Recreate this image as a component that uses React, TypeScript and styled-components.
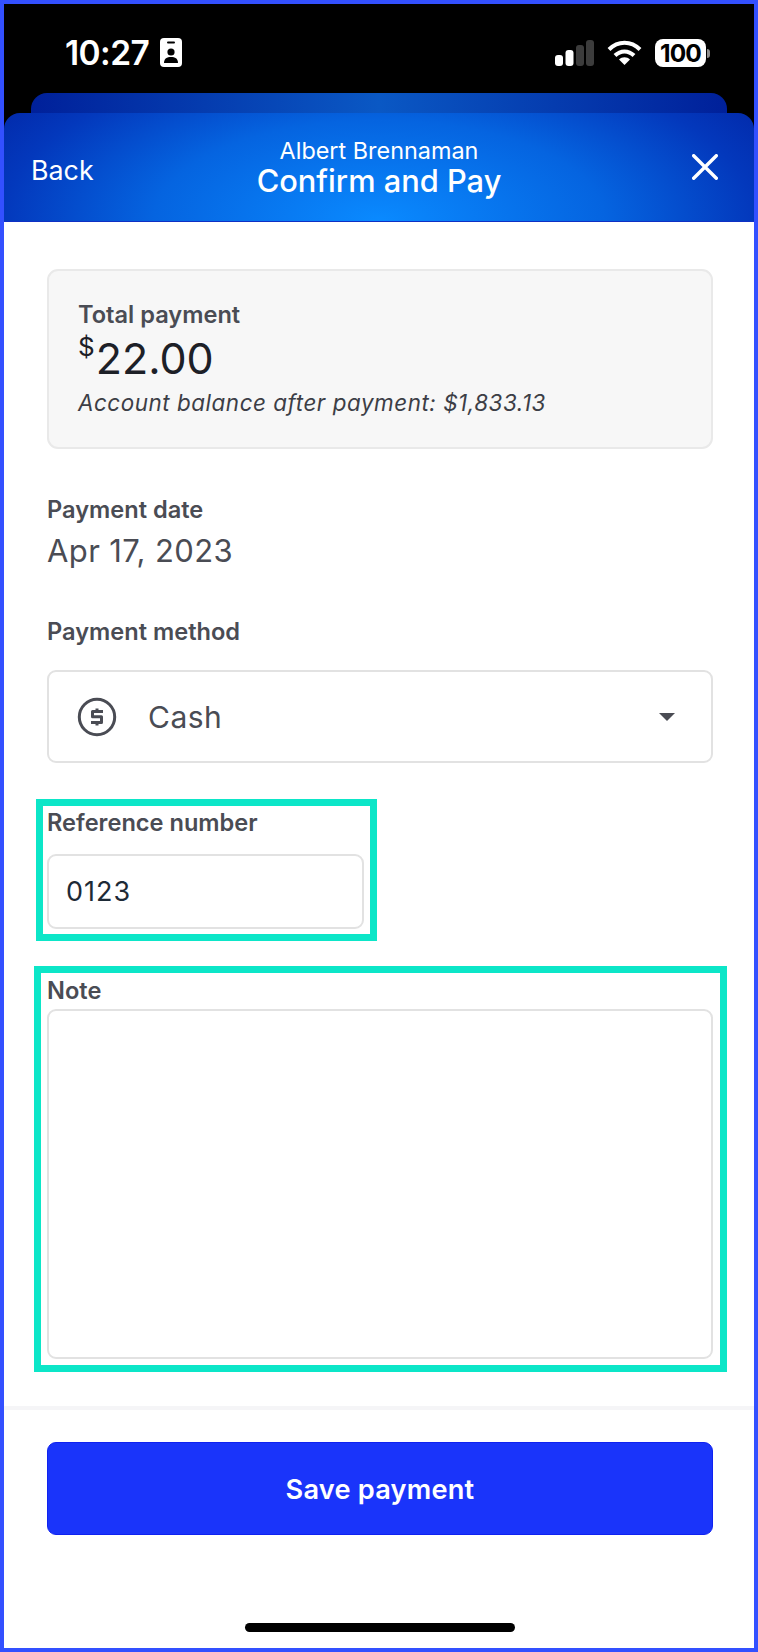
import React from "react";
import styled, { createGlobalStyle } from "styled-components";

const Global = createGlobalStyle`
  html, body { margin: 0; padding: 0; background: #fff; }
  body { font-family: Inter, "Liberation Sans", sans-serif; }
  * { box-sizing: border-box; }
`;

const Phone = styled.div`
  width: 758px;
  height: 1652px;
  border: 4px solid #3350ff;
  background: #fff;
  display: flex;
  flex-direction: column;
  overflow: hidden;
`;

const TopArea = styled.div`
  background: #000;
  display: flex;
  flex-direction: column;
`;

const StatusBar = styled.div`
  height: 89px;
  display: flex;
  align-items: flex-start;
  justify-content: space-between;
  padding: 34px 44px 0 61px;
  color: #fff;
`;

const StatusLeft = styled.div`
  display: flex;
  align-items: center;
  gap: 11px;
`;

const Time = styled.span`
  font-size: 33.5px;
  font-weight: 600;
  line-height: 28px;
  letter-spacing: -0.6px;
`;

const StatusRight = styled.div`
  display: flex;
  align-items: center;
  gap: 13px;
`;

const BatteryWrap = styled.div`
  display: flex;
  align-items: center;
  gap: 1px;
  margin-top: 1px;
`;

const BatteryBody = styled.div`
  width: 51px;
  height: 28px;
  border-radius: 8px;
  background: #fff;
  color: #000;
  font-size: 24.5px;
  font-weight: 700;
  line-height: 28px;
  text-align: center;
  letter-spacing: -0.8px;
`;

const BatteryNub = styled.div`
  width: 3px;
  height: 9px;
  border-radius: 0 3px 3px 0;
  background: #8d8d8d;
`;

const BackSheet = styled.div`
  height: 20px;
  margin: 0 27px;
  border-radius: 16px 16px 0 0;
  background: linear-gradient(90deg, #00209a 0%, #0a58c4 50%, #00209a 100%);
`;

const Header = styled.header`
  height: 109px;
  border-radius: 16px 16px 0 0;
  border-bottom: 1px solid #0f30c4;
  background: radial-gradient(ellipse 470px 210px at 50% 100%, #0a8aff 0%, #0564e0 48%, #0338bc 80%, #0226a6 100%);
  color: #fff;
  display: grid;
  grid-template-columns: 1fr auto 1fr;
  align-items: center;
  padding: 0 27px;
`;

const BackLink = styled.span`
  font-size: 26.8px;
  line-height: 30px;
  margin-top: 6px;
`;

const HeaderTitles = styled.div`
  display: flex;
  flex-direction: column;
  align-items: center;
`;

const HeaderSub = styled.span`
  font-size: 23.4px;
  line-height: 28px;
`;

const HeaderTitle = styled.span`
  font-size: 30.8px;
  font-weight: 500;
  line-height: 32px;
`;

const CloseButton = styled.div`
  justify-self: end;
  display: flex;
  margin-right: 9px;
`;

const Content = styled.main`
  display: flex;
  flex-direction: column;
  padding: 47px 41px 0 43px;
`;

const SummaryCard = styled.section`
  height: 180px;
  border: 2px solid #e9e9e9;
  border-radius: 11px;
  background: #f7f7f7;
  padding: 30px 30px 0 29px;
  display: flex;
  flex-direction: column;
`;

const SummaryLabel = styled.div`
  font-size: 23.6px;
  font-weight: 600;
  line-height: 28px;
  color: #4a4c54;
`;

const Amount = styled.div`
  display: flex;
  align-items: flex-start;
  color: #1d2027;
  height: 58px;
  font-size: 43px;
  line-height: 58px;
`;

const Currency = styled.span`
  font-size: 26px;
  line-height: 36px;
  margin-right: 1px;
`;

const BalanceNote = styled.div`
  margin-top: 2px;
  font-size: 22.4px;
  font-style: italic;
  line-height: 28px;
  letter-spacing: 0.55px;
  color: #3c3e46;
`;

const FieldLabel = styled.div`
  font-size: 23.6px;
  font-weight: 600;
  line-height: 28px;
  color: #4a4c54;
`;

const DateField = styled.div`
  margin-top: 47px;
`;

const DateValue = styled.div`
  margin-top: 8px;
  font-size: 31px;
  line-height: 38px;
  letter-spacing: 0.4px;
  color: #4a4c54;
`;

const MethodField = styled.div`
  margin-top: 48px;
`;

const SelectBox = styled.div`
  margin-top: 24px;
  height: 93px;
  border: 2px solid #e2e2e2;
  border-radius: 9px;
  display: flex;
  align-items: center;
  padding: 0 36px 0 28px;
  color: #4a4c54;
`;

const SelectText = styled.span`
  flex: 1;
  margin-left: 31px;
  font-size: 30px;
  letter-spacing: 0.5px;
`;

const Caret = styled.div`
  width: 0;
  height: 0;
  border-left: 8px solid transparent;
  border-right: 8px solid transparent;
  border-top: 8px solid #4a4c54;
`;

const HighlightField = styled.div<{ $wide?: boolean }>`
  position: relative;
  width: ${(p) => (p.$wide ? "100%" : "317px")};
`;

const Highlight = styled.div<{ $wide?: boolean }>`
  position: absolute;
  pointer-events: none;
  border: 7px solid #0ce6c8;
  top: ${(p) => (p.$wide ? "-11px" : "-10px")};
  bottom: ${(p) => (p.$wide ? "-13px" : "-12px")};
  left: ${(p) => (p.$wide ? "-13px" : "-11px")};
  right: ${(p) => (p.$wide ? "-14px" : "-13px")};
`;

const ReferenceField = styled(HighlightField)`
  margin-top: 46px;
`;

const NoteField = styled(HighlightField)`
  margin-top: 48px;
`;

const TextInput = styled.input`
  display: block;
  width: 100%;
  height: 75px;
  margin-top: 17px;
  border: 2px solid #e2e2e2;
  border-radius: 9px;
  padding: 0 17px;
  font: 400 27px Inter, sans-serif;
  letter-spacing: 1px;
  color: #1d2a36;
  background: #fff;
  outline: none;
`;

const NoteInput = styled.textarea`
  display: block;
  width: 100%;
  height: 350px;
  margin-top: 4px;
  border: 2px solid #e2e2e2;
  border-radius: 9px;
  padding: 16px 18px;
  font: 400 27px Inter, sans-serif;
  background: #fff;
  outline: none;
  resize: none;
`;

const Footer = styled.footer`
  height: 242px;
  margin-top: 47px;
  border-top: 4px solid #f5f5f7;
  padding: 32px 41px 0 43px;
  display: flex;
  flex-direction: column;
  align-items: center;
`;

const SaveButton = styled.button`
  width: 100%;
  height: 93px;
  border: 1px solid #0f22f0;
  border-radius: 9px;
  background: #1a34fa;
  color: #fff;
  font: 600 27.2px Inter, sans-serif;
  letter-spacing: 0.2px;
  padding: 2px 0 0 0;
`;

const HomeIndicator = styled.div`
  width: 270px;
  height: 9px;
  margin-top: 88px;
  border-radius: 5px;
  background: #000;
`;

const BadgeIcon = () => (
  <svg width="22" height="29" viewBox="0 0 22 29">
    <rect width="22" height="29" rx="4" fill="#fff" />
    <rect x="7" y="3.5" width="8" height="2" rx="1" fill="#000" />
    <circle cx="11" cy="14" r="3.6" fill="#000" />
    <path d="M4 25 C4 20.5 7 19 11 19 C15 19 18 20.5 18 25 Z" fill="#000" />
  </svg>
);

const SignalIcon = () => (
  <svg width="39" height="26" viewBox="0 0 39 26">
    <rect x="0" y="15" width="8" height="11" rx="3" fill="#fff" />
    <rect x="10.5" y="10" width="8" height="16" rx="3" fill="#fff" />
    <rect x="21" y="5" width="8" height="21" rx="3" fill="#3c3c3c" />
    <rect x="31" y="0" width="8" height="26" rx="3" fill="#3c3c3c" />
  </svg>
);

const WifiIcon = () => (
  <svg width="35" height="26" viewBox="0 0 35 26" fill="none" stroke="#fff" strokeWidth="4">
    <path d="M2 9.5 C11 0.5 24 0.5 33 9.5" />
    <path d="M8 15.5 C13.5 10 21.5 10 27 15.5" />
    <path d="M17.5 25 L12 19.5 C15 16.5 20 16.5 23 19.5 Z" fill="#fff" stroke="none" />
  </svg>
);

const CloseIcon = () => (
  <svg width="26" height="26" viewBox="0 0 26 26" fill="none" stroke="#fff" strokeWidth="3.4" strokeLinecap="round">
    <path d="M1.7 1.7 L24.3 24.3 M24.3 1.7 L1.7 24.3" />
  </svg>
);

const CashIcon = () => (
  <svg width="40" height="40" viewBox="0 0 40 40" fill="none" stroke="#4a4c54">
    <circle cx="20" cy="20" r="17.7" strokeWidth="3" />
    <path d="M26 14.5 H15.5 V19.8 H24.5 V25.5 H14" strokeWidth="3" strokeLinejoin="round" />
    <path d="M20 11.5 V14.5 M20 25.5 V28.5" strokeWidth="3" />
  </svg>
);

export default function App() {
  return (
    <>
      <Global />
      <Phone>
        <TopArea>
          <StatusBar>
            <StatusLeft>
              <Time>10:27</Time>
              <BadgeIcon />
            </StatusLeft>
            <StatusRight>
              <SignalIcon />
              <WifiIcon />
              <BatteryWrap>
                <BatteryBody>100</BatteryBody>
                <BatteryNub />
              </BatteryWrap>
            </StatusRight>
          </StatusBar>
          <BackSheet />
          <Header>
            <BackLink>Back</BackLink>
            <HeaderTitles>
              <HeaderSub>Albert Brennaman</HeaderSub>
              <HeaderTitle>Confirm and Pay</HeaderTitle>
            </HeaderTitles>
            <CloseButton>
              <CloseIcon />
            </CloseButton>
          </Header>
        </TopArea>
        <Content>
          <SummaryCard>
            <SummaryLabel>Total payment</SummaryLabel>
            <Amount>
              <Currency>$</Currency>22.00
            </Amount>
            <BalanceNote>Account balance after payment: $1,833.13</BalanceNote>
          </SummaryCard>
          <DateField>
            <FieldLabel>Payment date</FieldLabel>
            <DateValue>Apr 17, 2023</DateValue>
          </DateField>
          <MethodField>
            <FieldLabel>Payment method</FieldLabel>
            <SelectBox>
              <CashIcon />
              <SelectText>Cash</SelectText>
              <Caret />
            </SelectBox>
          </MethodField>
          <ReferenceField>
            <FieldLabel>Reference number</FieldLabel>
            <TextInput readOnly value="0123" />
            <Highlight />
          </ReferenceField>
          <NoteField $wide>
            <FieldLabel>Note</FieldLabel>
            <NoteInput readOnly />
            <Highlight $wide />
          </NoteField>
        </Content>
        <Footer>
          <SaveButton>Save payment</SaveButton>
          <HomeIndicator />
        </Footer>
      </Phone>
    </>
  );
}
